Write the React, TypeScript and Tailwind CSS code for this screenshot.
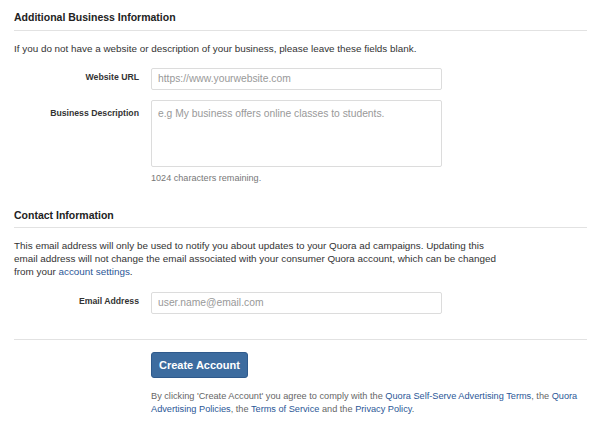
import React from 'react'

const font = { fontFamily: '"Liberation Sans", Arial, sans-serif' }

function Row({ label, children, top }: { label: string; children: React.ReactNode; top?: boolean }) {
  return (
    <div className={`flex ${top ? 'items-start' : 'items-center'}`}>
      <label className={`w-[137px] shrink-0 pr-[12px] text-right text-[8.7px] font-bold text-[#333] ${top ? 'pt-[7px]' : ''}`}>
        {label}
      </label>
      <div className="w-[291px]">{children}</div>
    </div>
  )
}

export default function App() {
  return (
    <div className="min-h-[429px] w-[595px] bg-white pl-[14px] pr-[8px] pt-[10px] text-[#333]" style={font}>
      {/* business */}
      <h2 className="text-[10.5px] font-bold leading-[14px] text-[#222]">Additional Business Information</h2>
      <div className="mt-[6px] border-b border-[#e2e2e2]" />
      <p className="mt-[11px] whitespace-nowrap text-[9.9px] leading-[13px]">
        If you do not have a website or description of your business, please leave these fields blank.
      </p>

      <div className="mt-[10px] flex flex-col gap-[10px]">
        <Row label="Website URL">
          <input
            className="h-[22px] w-full rounded-[2px] border border-[#dcdcdc] px-[6px] text-[10.3px] outline-none placeholder:text-[#999]"
            placeholder="https://www.yourwebsite.com"
          />
        </Row>
        <Row label="Business Description" top>
          <textarea
            className="block h-[67px] w-full resize-none rounded-[2px] border border-[#dcdcdc] px-[6px] py-[5px] text-[10.3px] outline-none placeholder:text-[#999]"
            placeholder="e.g My business offers online classes to students."
          />
          <p className="mt-[5px] text-[9.1px] text-[#777]">1024 characters remaining.</p>
        </Row>
      </div>

      {/* contact */}
      <h2 className="mt-[23px] text-[10.5px] font-bold leading-[14px] text-[#222]">Contact Information</h2>
      <div className="mt-[5px] border-b border-[#e2e2e2]" />
      <p className="mt-[11px] whitespace-nowrap text-[9.9px] leading-[13px]">
        This email address will only be used to notify you about updates to your Quora ad campaigns. Updating this
        <br />
        email address will not change the email associated with your consumer Quora account, which can be changed
        <br />
        from your <a className="text-[#2b5797]">account settings</a>.
      </p>

      <div className="mt-[11px]">
        <Row label="Email Address">
          <input
            className="h-[22px] w-full rounded-[2px] border border-[#dcdcdc] px-[6px] text-[10.3px] outline-none placeholder:text-[#999]"
            placeholder="user.name@email.com"
          />
        </Row>
      </div>

      <div className="mt-[25px] border-b border-[#e2e2e2]" />

      <div className="ml-[137px] mt-[12px]">
        <button className="h-[26px] rounded-[3px] border border-[#2f5a8c] bg-[#3d6c9f] px-[7px] text-[11px] font-bold text-white">
          Create Account
        </button>
        <p className="mt-[12px] whitespace-nowrap text-[9.2px] leading-[13px] text-[#666]">
          By clicking 'Create Account' you agree to comply with the{' '}
          <a className="text-[#2b5797]">Quora Self-Serve Advertising Terms</a>, the <a className="text-[#2b5797]">Quora</a>
          <br />
          <a className="text-[#2b5797]">Advertising Policies</a>, the{' '}
          <a className="text-[#2b5797]">Terms of Service</a> and the{' '}
          <a className="text-[#2b5797]">Privacy Policy</a>.
        </p>
      </div>
    </div>
  )
}
